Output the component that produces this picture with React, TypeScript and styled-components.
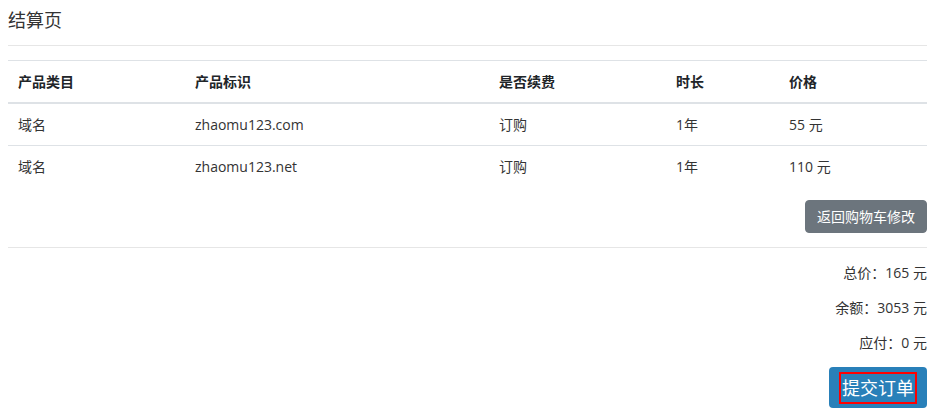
import styled, { createGlobalStyle } from 'styled-components';

const GlobalStyle = createGlobalStyle`
  body {
    margin: 8px;
    font-family: "Open Sans", "Noto Sans CJK SC", sans-serif;
    color: #212529;
    background: #fff;
  }
`;

type Item = {
  category: string;
  domain: string;
  renew: string;
  period: string;
  price: number;
};

const items: Item[] = [
  { category: '域名', domain: 'zhaomu123.com', renew: '订购', period: '1年', price: 55 },
  { category: '域名', domain: 'zhaomu123.net', renew: '订购', period: '1年', price: 110 },
];

const columns = [
  { title: '产品类目', width: 177 },
  { title: '产品标识', width: 304 },
  { title: '是否续费', width: 177 },
  { title: '时长', width: 113 },
  { title: '价格', width: 148 },
];

const App: React.FC = () => {
  return (
    <Page>
      <GlobalStyle />
      <Title>结算页</Title>
      <Rule $gap={13} />
      <Table>
        <colgroup>
          {columns.map((c) => (
            <col key={c.title} style={{ width: c.width }} />
          ))}
        </colgroup>
        <thead>
          <tr>
            {columns.map((c) => (
              <Th key={c.title}>{c.title}</Th>
            ))}
          </tr>
        </thead>
        <tbody>
          {items.map((it) => (
            <tr key={it.domain}>
              <Td>{it.category}</Td>
              <Td>{it.domain}</Td>
              <Td>{it.renew}</Td>
              <Td>{it.period}</Td>
              <Td>{it.price} 元</Td>
            </tr>
          ))}
        </tbody>
      </Table>
      <Actions>
        <BackButton>返回购物车修改</BackButton>
      </Actions>
      <Rule $gap={14} />
      <Summary>
        <SummaryLine>总价：165 元</SummaryLine>
        <SummaryLine>余额：3053 元</SummaryLine>
        <SummaryLine>应付：0 元</SummaryLine>
        <SubmitButton>
          <FocusLabel>提交订单</FocusLabel>
        </SubmitButton>
      </Summary>
    </Page>
  );
};

export default App;

const Page = styled.div`
  width: 919px;
`;

const Title = styled.div`
  font-size: 18px;
  line-height: 24px;
  color: #333;
`;

const Rule = styled.hr<{ $gap: number }>`
  margin: ${({ $gap }) => $gap}px 0 14px;
  border: 0;
  border-top: 1px solid #e6e6e6;
  height: 0;
`;

const Table = styled.table`
  width: 100%;
  border-collapse: collapse;
  table-layout: fixed;
  font-size: 14px;
`;

const Th = styled.th`
  text-align: left;
  font-weight: 700;
  padding: 10px;
  line-height: 21px;
  border-top: 1px solid #dee2e6;
  border-bottom: 2px solid #dee2e6;
  color: #212529;
`;

const Td = styled.td`
  padding: 10px;
  line-height: 21px;
  border-top: 1px solid #dee2e6;
  color: #333;
  tbody tr:first-child & {
    border-top: 0;
  }
`;

const Actions = styled.div`
  display: flex;
  justify-content: flex-end;
  margin-top: 13px;
`;

const BackButton = styled.button`
  font-family: inherit;
  font-size: 14px;
  line-height: 21px;
  padding: 6px 11px;
  color: #fff;
  background: #6c757d;
  border: 1px solid #6c757d;
  border-radius: 4px;
  cursor: pointer;
  height: 33px;
  display: flex;
  align-items: center;
`;

const Summary = styled.div`
  display: flex;
  flex-direction: column;
  align-items: flex-end;
`;

const SummaryLine = styled.div`
  font-size: 14px;
  line-height: 21px;
  margin-top: 14px;
  color: #333;
  &:first-child {
    margin-top: 0;
  }
`;

const SubmitButton = styled.button`
  margin-top: 14px;
  font-family: inherit;
  padding: 5px 10px 4px;
  background: #2980b9;
  border: 0;
  border-radius: 4px;
  color: #fff;
  cursor: pointer;
  display: flex;
`;

const FocusLabel = styled.span`
  font-size: 18px;
  line-height: 28px;
  padding: 0 1px;
  border: 2px solid #ff0000;
`;
